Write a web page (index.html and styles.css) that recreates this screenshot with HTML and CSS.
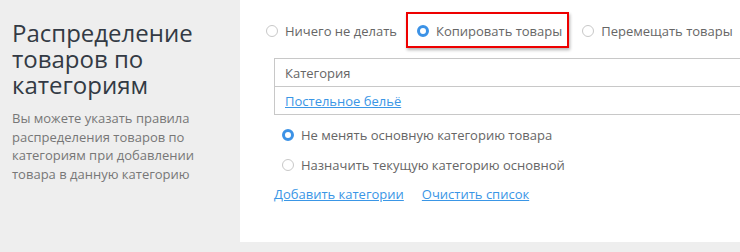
FILE: index.html
```html
<!DOCTYPE html>
<html lang="ru">
<head>
<meta charset="utf-8">
<link rel="stylesheet" href="styles.css">
</head>
<body>
<div class="page">
  <aside class="side">
    <h1 class="title">Распределение товаров по категориям</h1>
    <p class="desc">Вы можете указать правила распределения товаров по категориям при добавлении товара в данную категорию</p>
  </aside>
  <main class="main">
    <div class="modes">
      <label class="radio"><span class="dot"></span><span>Ничего не делать</span></label>
      <label class="radio highlighted"><span class="dot checked"></span><span>Копировать товары</span></label>
      <label class="radio"><span class="dot"></span><span>Перемещать товары</span></label>
    </div>
    <table class="cats">
      <tr><td class="head">Категория</td></tr>
      <tr><td><a href="#" class="link">Постельное бельё</a></td></tr>
    </table>
    <div class="options">
      <label class="radio"><span class="dot checked"></span><span>Не менять основную категорию товара</span></label>
      <label class="radio"><span class="dot"></span><span>Назначить текущую категорию основной</span></label>
    </div>
    <div class="actions">
      <a href="#" class="link">Добавить категории</a>
      <a href="#" class="link">Очистить список</a>
    </div>
  </main>
</div>
</body>
</html>
```
FILE: styles.css
```css
html, body {
  margin: 0;
  padding: 0;
  background: #eeeeee;
}
body {
  font-family: "Open Sans", "Noto Sans", sans-serif;
  font-size: 13px;
  color: #666;
  width: 740px;
  height: 252px;
}
.page {
  display: flex;
  height: 242px;
}
.side {
  width: 228px;
  flex: none;
  padding: 20px 0 0 12px;
}
.title {
  margin: 0;
  font-size: 24px;
  line-height: 26px;
  font-weight: 400;
  color: #333a44;
  width: 200px;
}
.desc {
  margin: 11px 0 0;
  font-size: 13px;
  line-height: 18.5px;
  color: #777;
  width: 200px;
}
.main {
  flex: 1;
  background: #fff;
  padding: 21px 0 0 34px;
  min-width: 0;
}
.modes {
  display: flex;
  gap: 20px;
  margin-left: -8px;
  height: 20px;
}
.radio {
  display: flex;
  align-items: center;
  gap: 7px;
  height: 20px;
  line-height: 20px;
  white-space: nowrap;
  color: #666;
}
.dot {
  width: 12px;
  height: 12px;
  box-sizing: border-box;
  border: 1px solid #c8c8c8;
  border-radius: 50%;
  background: #fff;
  flex: none;
}
.dot.checked {
  border: 3.5px solid #3c92e6;
  background: #fff;
}
.highlighted {
  position: relative;
}
.highlighted::after {
  content: "";
  position: absolute;
  left: -11px;
  right: -7px;
  top: -9px;
  bottom: -7px;
  border: 2px solid #ee0000;
  box-shadow: 1px 2px 3px rgba(0, 0, 0, 0.3);
}
.cats {
  margin-top: 17px;
  border-collapse: collapse;
  width: 100%;
}
.cats td {
  border: 1px solid #c8c8c8;
  border-right: 0;
  height: 27px;
  padding: 0 10px;
  line-height: 20px;
}
.cats td.head {
  color: #666;
}
.link {
  color: #3a96e6;
  text-decoration: underline;
}
.options {
  margin: 10px 0 0 8px;
  display: flex;
  flex-direction: column;
  gap: 10px;
}
.actions {
  margin-top: 9px;
  display: flex;
  gap: 18px;
  line-height: 20px;
}
```
